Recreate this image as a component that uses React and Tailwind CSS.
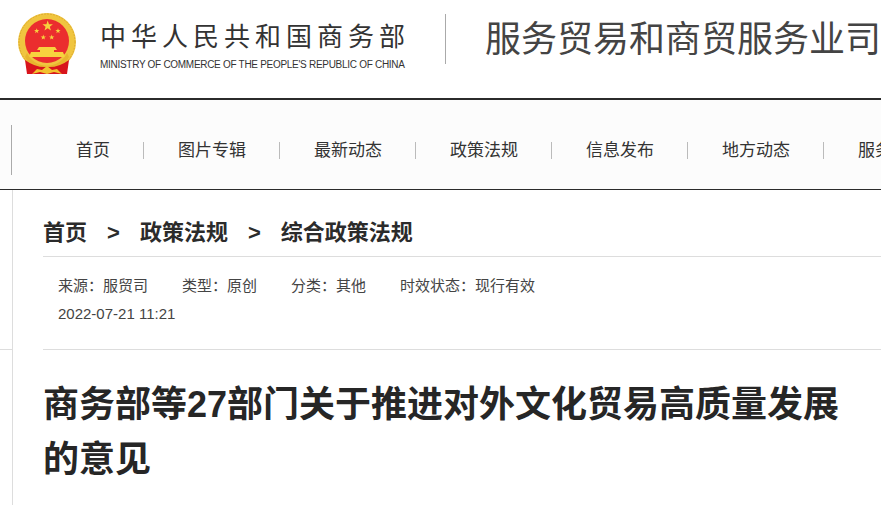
const cjk = { fontFamily: '"Liberation Sans", "Noto Sans CJK SC", sans-serif' };

const navItems = ['首页', '图片专辑', '最新动态', '政策法规', '信息发布', '地方动态', '服务贸易'];
const metaItems = ['来源:服贸司', '类型:原创', '分类:其他', '时效状态:现行有效'];

function Star({ x, y, r }) {
    const pts = [];
    for (let i = 0; i < 10; i++) {
        const a = -Math.PI / 2 + (i * Math.PI) / 5;
        const d = i % 2 === 0 ? r : r * 0.4;
        pts.push(`${x + d * Math.cos(a)},${y + d * Math.sin(a)}`);
    }
    return <polygon points={pts.join(' ')} fill="#f7d23e" />;
}

function Emblem() {
    return (
        <svg width="60" height="64" viewBox="0 0 60 64" className="shrink-0">
            {/* ring */}
            <circle cx="29" cy="29" r="29" fill="#f0c53f" />
            <circle cx="29" cy="29" r="28" fill="none" stroke="#d9a52c" strokeWidth="1" strokeDasharray="1.5 1.5" />
            <circle cx="29" cy="28" r="22" fill="#eb2d2e" />
            {/* stars */}
            <Star x={29.7} y={13} r={5.5} />
            <Star x={18.7} y={18} r={2.8} />
            <Star x={40} y={18} r={2.8} />
            <Star x={25.3} y={24.3} r={2.8} />
            <Star x={33.7} y={24.3} r={2.8} />
            {/* gate */}
            <path d="M21 34 L37 34 L39 37 L19 37 Z" fill="#f7d23e" />
            <rect x="22" y="37" width="14" height="2" fill="#f7d23e" />
            <path d="M13 39 L45 39 L47 44 L11 44 Z" fill="#f7d23e" />
            {/* lower wreath */}
            <path d="M9 40 A22 22 0 0 0 49 40 L51 44 A25 25 0 0 1 7 44 Z" fill="#e8b52e" />
            {/* ribbons over the foot of the ring */}
            <path d="M7 47 Q18 55 29 54 Q40 55 51 47 L49 61 L9 61 Z" fill="#d8141c" />
            <path d="M14 61 L19 56 L24 57 L29 53 L34 57 L39 56 L44 61 L36 59 L29 61 L22 59 Z" fill="#f2c230" />
        </svg>
    );
}

export default function App() {
    return (
        <div className="w-[881px] h-[505px] overflow-hidden bg-white text-[#333]" style={cjk}>
            {/* Header */}
            <div className="h-[100px] border-b-2 border-[#2b2b2b] flex items-start pl-[18px]">
                <div className="mt-[13px]">
                    <Emblem />
                </div>
                <div className="ml-[22px] mt-[19px] w-[306px] shrink-0">
                    <div className="text-[26px] leading-[36px] tracking-[5px] whitespace-nowrap">中华人民共和国商务部</div>
                    <div className="text-[10px] leading-[14px] mt-[3px] whitespace-nowrap tracking-[-0.29px]">MINISTRY OF COMMERCE OF THE PEOPLE'S REPUBLIC OF CHINA</div>
                </div>
                <div className="ml-[39px] mt-[14px] w-px h-[50px] bg-[#aaa] shrink-0" />
                <div className="ml-[39px] mt-[15px] text-[36px] leading-[50px] whitespace-nowrap text-[#444]">服务贸易和商贸服务业司</div>
            </div>

            {/* Nav */}
            <div className="h-[90px] bg-[#fcfcfc] border-b border-[#2b2b2b] flex items-center pl-[11px] pt-[12px]">
                <div className="w-px h-[50px] bg-[#aaa] shrink-0 -mt-[1px]" />
                <div className="ml-[30px] flex items-center">
                    {navItems.map((item, i) => (
                        <div
                            key={item}
                            className={`pl-[34px] pr-[33px] text-[17px] leading-[17px] whitespace-nowrap shrink-0 ${i < navItems.length - 1 ? 'border-r border-[#bbb]' : ''}`}
                        >
                            {item}
                        </div>
                    ))}
                </div>
            </div>

            {/* Content */}
            <div className="flex h-[315px]">
                <div className="w-[13px] shrink-0 border-r border-[#ddd] flex flex-col">
                    <div className="h-[160px] border-b border-[#ddd] shrink-0" />
                </div>
                <div className="ml-[30px] flex-1 min-w-0">
                    <div className="h-[67px] border-b border-[#ddd] flex items-center pt-[19px] text-[22px] font-bold text-[#2b2b2b] whitespace-nowrap">
                        <span>首页</span>
                        <span className="mx-[20px]">&gt;</span>
                        <span>政策法规</span>
                        <span className="mx-[20px]">&gt;</span>
                        <span>综合政策法规</span>
                    </div>
                    <div className="h-[93px] border-b border-[#ddd] pl-[15px] pt-[15px] text-[15px] leading-[28px] text-[#444]">
                        <div className="flex gap-[34px] whitespace-nowrap">
                            {metaItems.map((item) => (
                                <span key={item}>{item.replace(':', '\uFF1A')}</span>
                            ))}
                        </div>
                        <div>2022-07-21 11:21</div>
                    </div>
                    <h1 className="mt-[27px] text-[36px] leading-[55px] font-bold text-[#262626] w-[810px]">
                        商务部等27部门关于推进对外文化贸易高质量发展的意见
                    </h1>
                </div>
            </div>
        </div>
    );
}
